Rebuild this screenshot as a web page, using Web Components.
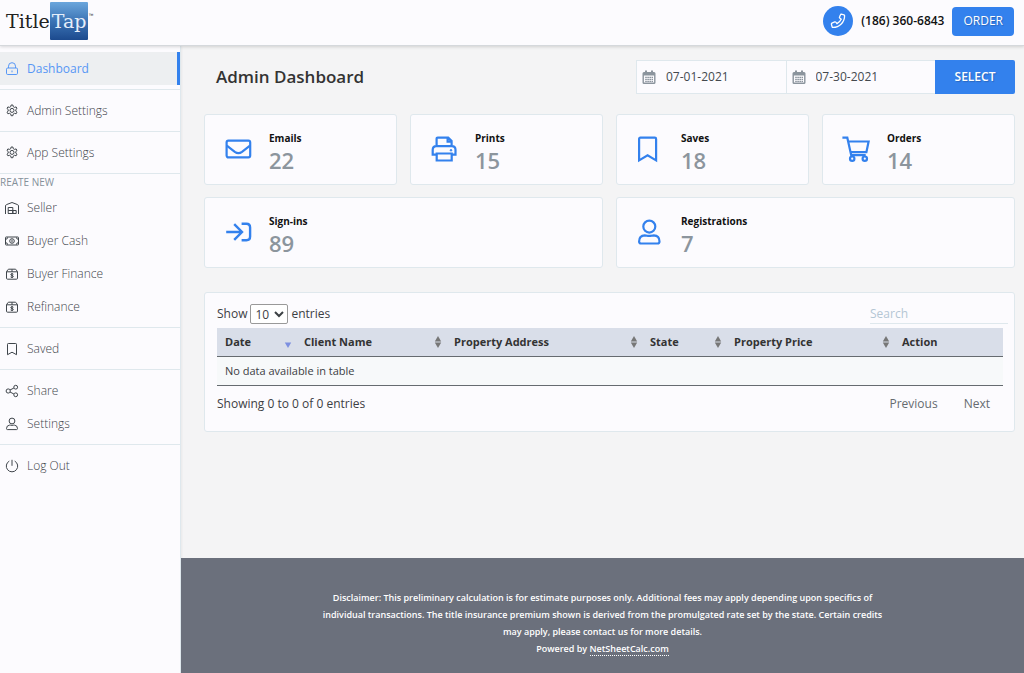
<!DOCTYPE html>
<html lang="en">
<head>
<meta charset="utf-8">
<meta name="viewport" content="width=device-width, initial-scale=1">
<title>Admin Dashboard</title>
<style>
  html, body { margin: 0; }
  body {
    --blue: #3381ed;
    --surface: #fcfbfe;
    --page: #f4f4f5;
    --line: #dfe8ed;
    --text: #3c4044;
    font: 12px/18px "Open Sans", "Noto Sans", sans-serif;
    color: var(--text);
    background: var(--page);
  }
</style>
</head>
<body>
<tt-app>
  <tt-header slot="header" phone="(186) 360-6843"></tt-header>
  <tt-sidebar slot="sidebar">
    <nav-group>
      <nav-item icon="lock" href="#dashboard" active>Dashboard</nav-item>
    </nav-group>
    <nav-group>
      <nav-item icon="gear" href="#admin-settings">Admin Settings</nav-item>
    </nav-group>
    <nav-group>
      <nav-item icon="gear" href="#app-settings">App Settings</nav-item>
    </nav-group>
    <nav-group label="REATE NEW">
      <nav-item icon="house" href="#seller">Seller</nav-item>
      <nav-item icon="cash" href="#buyer-cash">Buyer Cash</nav-item>
      <nav-item icon="box" href="#buyer-finance">Buyer Finance</nav-item>
      <nav-item icon="box" href="#refinance">Refinance</nav-item>
    </nav-group>
    <nav-group>
      <nav-item icon="bookmark-thin" href="#saved">Saved</nav-item>
    </nav-group>
    <nav-group>
      <nav-item icon="share" href="#share">Share</nav-item>
      <nav-item icon="user-thin" href="#settings">Settings</nav-item>
    </nav-group>
    <nav-group>
      <nav-item icon="power" href="#logout">Log Out</nav-item>
    </nav-group>
  </tt-sidebar>

  <page-title>Admin Dashboard<date-range slot="tools" from="07-01-2021" to="07-30-2021"></date-range></page-title>
  <stat-grid>
    <stat-card icon="mail" label="Emails">22</stat-card>
    <stat-card icon="printer" label="Prints">15</stat-card>
    <stat-card icon="bookmark" label="Saves">18</stat-card>
    <stat-card icon="cart" label="Orders">14</stat-card>
    <stat-card icon="signin" label="Sign-ins" wide>89</stat-card>
    <stat-card icon="user" label="Registrations" wide>7</stat-card>
  </stat-grid>
  <entries-panel></entries-panel>

  <tt-footer slot="footer">Disclaimer: This preliminary calculation is for estimate purposes only. Additional fees may apply depending upon specifics of individual transactions. The title insurance premium shown is derived from the promulgated rate set by the state. Certain credits may apply, please contact us for more details.</tt-footer>
</tt-app>

<script>
const ICONS = {
  lock: ['0 0 14 14', 1, '<rect x="1.5" y="6" width="11" height="6.5" rx="1.2"/><path d="M3.5 6V4.2a3.5 3.5 0 0 1 7 0V6M7 8.500v1.800"/>'],
  gear: ['0 0 14 14', 1, '<path d="M5.800 2.600l.3-1.600h1.800l.3 1.600 1.400.8 1.500-.5.9 1.600-1.200 1v1.700l1.200 1-.9 1.600-1.500-.5-1.400.8-.3 1.600H6.100l-.3-1.600-1.400-.8-1.500.5-.9-1.600 1.200-1V5.500l-1.200-1 .9-1.600 1.500.5z"/><circle cx="7" cy="6.400" r="2"/>'],
  house: ['0 0 14 14', 1, '<path d="M.5 13V5q0-1 1-1.400L7 1.500l5.500 2.100q1 .4 1 1.400v8M3.200 12.500v-6h4.600v6zM3.200 9.500h8v3h-8M7.800 9.500v3"/>'],
  cash: ['0 0 14 14', 1, '<rect x=".5" y="3" width="13" height="8" rx=".6"/><circle cx="7" cy="7" r="2.300"/><path d="M7 5.600v2.800M1 5.200q1.600 0 1.600-1.800M13 5.200q-1.600 0-1.600-1.800M1 8.800q1.600 0 1.600 1.800M13 8.800q-1.600 0-1.600 1.800"/>'],
  box: ['0 0 14 14', 1, '<path d="M1.500 4.800v6.400q0 1 1 1h9q1 0 1-1V4.800l-1.300-2q-.3-.6-1-.6H3.800q-.7 0-1 .6zM1.500 4.800h11M7 2.300v2.500M8.400 7.300q-.6-.5-1.400-.5-1.200 0-1.200.8 0 .7 1.200.9 1.300.2 1.300 1 0 .9-1.300.9-.9 0-1.400-.5M7 6v5"/>'],
  'bookmark-thin': ['0 0 14 14', 1, '<path d="M2.500 12.700V2.300q0-.8.8-.8h7.400q.8 0 .8.800v10.400L7 10.200z"/>'],
  share: ['0 0 14 14', 1, '<circle cx="3.200" cy="7" r="2.100"/><circle cx="10.700" cy="3.200" r="1.900"/><circle cx="10.700" cy="10.800" r="1.900"/><path d="M5 6l3.900-2M5 8l3.900 2"/>'],
  'user-thin': ['0 0 14 14', 1, '<circle cx="7" cy="4" r="2.900"/><path d="M1.500 11.600q0-3.300 3.200-3.500 1 0 2.300.3 1.300-.3 2.300-.3 3.200.2 3.200 3.500 0 1-1 1h-9q-1 0-1-1z"/>'],
  power: ['0 0 14 14', 1, '<path d="M4.300 2.100a5.700 5.700 0 1 0 5.400 0M7 .8v6"/>'],
  phone: ['0 0 16 16', 1.3, '<path d="M11.300 1.200l2.600.6q.7.200.7.900A11.600 11.600 0 0 1 3 14.400q-.7 0-.9-.7l-.7-2.600q-.1-.7.500-1l2.900-1.200q.6-.2 1 .2l1.200 1.500a9.500 9.500 0 0 0 4.200-4.300L9.700 5.100q-.5-.4-.2-1l1-2.400q.2-.6.8-.5z"/>'],
  calendar: ['0 0 14 14', 1.4, '<rect x="1.200" y="2.700" width="11.600" height="10.600" rx=".8"/><path d="M1.200 4.200h11.600" stroke-width="2.600"/><path d="M4 .5v2.500M10 .5v2.500" stroke-width="2"/><path d="M3.200 7.300h7.800M3.200 9.300h7.800M3.200 11.300h7.800" stroke-width="1.300" stroke-dasharray="1.600 .5"/>'],
  mail: ['0 0 28 28', 2.2, '<rect x="2.600" y="4.600" width="23.600" height="16.800" rx="1.800"/><path d="M2.800 9.600l8 6.300q3.600 2.600 7.200 0l8-6.300"/>'],
  printer: ['0 0 28 28', 2.2, '<path d="M6.600 10V2.800q0-1.200 1.200-1.200h10.400l3.400 3.400v5M17.600 2v3.600h4M6.200 18.600H2.700v-4.800q0-3.600 3.600-3.600h15.600q3.600 0 3.600 3.600v4.800h-3.600M6.700 17.500h15v7h-15z"/><circle cx="21" cy="14.300" r=".8" fill="currentColor" stroke-width="1"/>'],
  bookmark: ['0 0 28 28', 2.2, '<path d="M3.100 24.400V2.900q0-1.300 1.300-1.300h14.400q1.300 0 1.300 1.300v21.500l-8.500-5z"/>'],
  cart: ['0 0 28 28', 2.2, '<path d="M.4 1.700h4.900l3.900 17.500h14.500M6 5.500h20.600l-2.200 10.600H8.400"/><circle cx="10.200" cy="22.700" r="2.200"/><circle cx="22.800" cy="22.700" r="2.200"/>'],
  signin: ['0 0 28 28', 2.4, '<path d="M2.200 13h15.500M10.200 5.200l7.800 7.800-7.800 7.800M17.600 4.700h4.800q3.700 0 3.700 3.700v9.200q0 3.700-3.700 3.700h-4.800"/>'],
  user: ['0 0 28 28', 2.2, '<circle cx="13.300" cy="7.600" r="6"/><path d="M3.100 22.500q0-6 5.700-6.200 1 0 2.300.4 2 .5 4.400 0 1.300-.4 2.300-.4 5.700.2 5.700 6.200 0 2-2 2H5.100q-2 0-2-2z"/>']
};

function define(name, build) {
  customElements.define(name, class extends HTMLElement {
    connectedCallback() {
      if (this.shadowRoot) return;
      const template = document.createElement('template');
      template.innerHTML = build(this);
      this.attachShadow({ mode: 'open' }).append(template.content.cloneNode(true));
    }
  });
}

define('tt-icon', el => {
  const [box, width, body] = ICONS[el.getAttribute('name')];
  return `<style>
    :host { display: inline-block; flex: none; width: 14px; height: 14px; }
    svg { display: block; width: 100%; height: 100%; overflow: visible; }
  </style>
  <svg viewBox="${box}" fill="none" stroke="currentColor" stroke-width="${width}" aria-hidden="true">${body}</svg>`;
});

define('tt-app', () => `<style>
    :host { display: flex; flex-direction: column; min-height: 100vh; }
    header { position: relative; z-index: 1; }
    .body { display: grid; grid-template-columns: 181px minmax(0, 1fr); flex: 1; }
    .content { display: flex; flex-direction: column; }
    main { flex: 1; padding: 14px 9px 24px 23px; }
  </style>
  <header><slot name="header"></slot></header>
  <div class="body">
    <slot name="sidebar"></slot>
    <div class="content">
      <main><slot></slot></main>
      <slot name="footer"></slot>
    </div>
  </div>`);

define('tt-header', el => `<style>
    :host {
      display: flex; align-items: center; justify-content: space-between; box-sizing: border-box;
      height: 46px; padding: 0 10px 3px 6px;
      background: var(--surface); border-bottom: 1px solid #d5d8dc; box-shadow: 0 1px 3px #00000026;
    }
    .logo { display: flex; align-items: center; color: #222; text-decoration: none; font: 19px/38px "DejaVu Serif", serif; }
    .tap { padding: 0 2px; color: #e6eefa; background: linear-gradient(#6ba6dc, #3c74b5 50%, #1c4a8e); border-radius: 1px; }
    .tm { align-self: flex-start; font: 5px/26px "Liberation Sans", sans-serif; }
    .contact { display: flex; align-items: center; gap: 8px; }
    .call { display: flex; align-items: center; gap: 8px; color: #111; font-weight: 600; text-decoration: none; }
    .disc { display: grid; place-items: center; width: 30px; height: 30px; border-radius: 50%; background: var(--blue); color: #fff; }
    .disc tt-icon { width: 16px; height: 16px; }
    button {
      height: 29px; padding: 0 11px; border: 0; border-radius: 4px; background: var(--blue);
      color: #fff; font: inherit; text-shadow: 1px 1px 1px #0003;
    }
  </style>
  <a class="logo" href="#home"><span>Title</span><span class="tap">Tap</span><span class="tm">™</span></a>
  <div class="contact">
    <a class="call" href="tel:1863606843"><span class="disc"><tt-icon name="phone"></tt-icon></span><span>${el.getAttribute('phone')}</span></a>
    <button type="button">ORDER</button>
  </div>`);

define('tt-sidebar', () => `<style>
    :host { display: block; box-sizing: border-box; padding-top: 2px; background: var(--surface); border-right: 1px solid var(--line); box-shadow: 1px 0 2px #0000000d; }
  </style>
  <nav aria-label="Main"><slot></slot></nav>`);

define('nav-group', el => `<style>
    :host { display: block; padding: 4px 0; border-bottom: 1px solid var(--line); }
    :host([label]) { padding-top: 0; }
    :host(:last-child) { border-bottom: 0; }
    .label { color: #84909a; font-size: 10px; line-height: 17px; }
  </style>
  ${el.hasAttribute('label') ? `<div class="label">${el.getAttribute('label')}</div>` : ''}
  <slot></slot>`);

define('nav-item', el => `<style>
    :host { display: block; }
    a {
      display: flex; align-items: center; gap: 8px; box-sizing: border-box; height: 33px; padding-left: 5px;
      border-right: 3px solid transparent; color: #3f454b; font-weight: 300; text-decoration: none;
    }
    :host([active]) a { color: #5797f5; background: #edeff1; border-color: var(--blue); font-weight: 400; }
  </style>
  <a href="${el.getAttribute('href')}"><tt-icon name="${el.getAttribute('icon')}"></tt-icon><span><slot></slot></span></a>`);

define('page-title', () => `<style>
    :host { display: flex; align-items: center; justify-content: space-between; padding-left: 12px; }
    h1 { margin: 0; font-size: 17px; line-height: 24px; font-weight: 600; color: #333; }
  </style>
  <h1><slot></slot></h1><slot name="tools"></slot>`);

define('date-range', el => `<style>
    :host { display: flex; width: 379px; height: 34px; }
    label {
      display: flex; align-items: center; flex: 1; gap: 10px; box-sizing: border-box; min-width: 0; padding-left: 5px;
      border: 1px solid var(--line); border-right: 0; background: var(--surface); color: #8b949d;
    }
    input { flex: 1; width: 0; min-width: 0; padding: 0; border: 0; outline: 0; background: none; color: #44494e; font: inherit; }
    button {
      flex: none; width: 80px; padding: 0; border: 0; border-radius: 0 2px 2px 0; background: var(--blue); color: #fff;
      font: inherit; font-weight: 600; text-shadow: 1px 1px 1px #0003;
    }
  </style>
  <label><tt-icon name="calendar"></tt-icon><input type="text" aria-label="From" value="${el.getAttribute('from')}"></label>
  <label><tt-icon name="calendar"></tt-icon><input type="text" aria-label="To" value="${el.getAttribute('to')}"></label>
  <button type="button">SELECT</button>`);

define('stat-grid', () => `<style>
    :host { display: grid; grid-template-columns: repeat(4, minmax(0, 1fr)); gap: 12px 13px; margin: 20px 0 24px; }
  </style><slot></slot>`);

define('stat-card', el => `<style>
    :host {
      display: flex; align-items: center; gap: 17px; box-sizing: border-box; height: 71px; padding-left: 19px;
      border: 1px solid var(--line); border-radius: 3px; background: var(--surface);
    }
    :host([wide]) { grid-column: span 2; }
    tt-icon { width: 28px; height: 28px; color: var(--blue); }
    .text { padding-top: 4px; }
    .label { color: #111; font-size: 10px; line-height: 17px; font-weight: 700; }
    .value { color: #8c959d; font-size: 22px; line-height: 26px; font-weight: 600; }
  </style>
  <tt-icon name="${el.getAttribute('icon')}"></tt-icon>
  <div class="text"><div class="label">${el.getAttribute('label')}</div><div class="value"><slot></slot></div></div>`);

define('sort-mark', () => `<style>
    :host { display: block; flex: none; width: 8px; height: 12px; color: #777; }
    :host([down]) { color: #7d8fe0; }
    :host([down]) .up { display: none; }
    svg { display: block; }
  </style>
  <svg width="8" height="12" viewBox="0 0 8 12" fill="currentColor" aria-hidden="true"><path class="up" d="M4 0l3.200 5.500H.8z"/><path d="M4 12l3.200-5.500H.8z"/></svg>`);

define('entries-panel', () => {
  const columns = [['Date', 79], ['Client Name', 150], ['Property Address', 196], ['State', 84], ['Property Price', 168], ['Action', 109]];
  const cols = columns.map(([, w]) => `<col style="width:${w}px">`).join('');
  const heads = columns.map(([t], i) => `<th scope="col"><div class="head"><span>${t}</span>${
    i < 5 ? `<sort-mark${i ? '' : ' down'}></sort-mark>` : ''}</div></th>`).join('');
  return `<style>
    :host { display: block; padding: 11px 12px; border: 1px solid var(--line); border-radius: 3px; background: var(--surface); }
    .bar { display: flex; align-items: center; justify-content: space-between; height: 20px; padding-bottom: 4px; }
    .length { display: flex; align-items: center; gap: 3px; }
    select { width: 38px; height: 20px; padding: 0; border: 1px solid #999; border-radius: 2px; background: #fff; color: inherit; font: inherit; }
    input {
      box-sizing: border-box; width: 138px; height: 20px; margin-right: -6px; padding: 0; border: 0; outline: 0;
      border-bottom: 1px solid var(--line); background: none; color: inherit; font: inherit;
    }
    input::placeholder { color: #b4c6d4; opacity: 1; }
    table { width: 100%; table-layout: fixed; border-collapse: separate; border-spacing: 0; border-bottom: 1px solid #666b70; font-size: 11px; }
    th { height: 28px; padding: 0 4px 0 8px; border-bottom: 1px solid #666b70; background: #d9dee9; color: #333; text-align: left; }
    .head { display: flex; align-items: center; justify-content: space-between; white-space: nowrap; }
    td { height: 28px; padding: 0 8px; background: #f7f9fa; }
    .foot { display: flex; align-items: center; justify-content: space-between; margin-top: 8px; height: 20px; padding-bottom: 6px; }
    .pages { display: flex; gap: 26px; padding-right: 12px; }
    .pages button { padding: 0; border: 0; background: none; color: #666b70; font: inherit; }
  </style>
  <div class="bar">
    <label class="length">Show <select><option>10</option><option>25</option><option>50</option></select> entries</label>
    <input type="search" placeholder="Search" aria-label="Search">
  </div>
  <table>
    <colgroup>${cols}</colgroup>
    <thead><tr>${heads}</tr></thead>
    <tbody><tr><td colspan="6">No data available in table</td></tr></tbody>
  </table>
  <div class="foot">
    <span>Showing 0 to 0 of 0 entries</span>
    <div class="pages"><button type="button">Previous</button><button type="button">Next</button></div>
  </div>`;
});

define('tt-footer', () => `<style>
    :host { display: block; padding: 31px 16px 16px; background: #6b707c; color: #fff; font-size: 9px; line-height: 17px; font-weight: 600; text-align: center; }
    p { max-width: 570px; margin: 0 auto; }
    a { color: inherit; text-decoration: none; border-bottom: 1px dotted #fff; }
  </style>
  <p><slot></slot></p>
  <p>Powered by <a href="#netsheetcalc">NetSheetCalc.com</a></p>`);
</script>
</body>
</html>
